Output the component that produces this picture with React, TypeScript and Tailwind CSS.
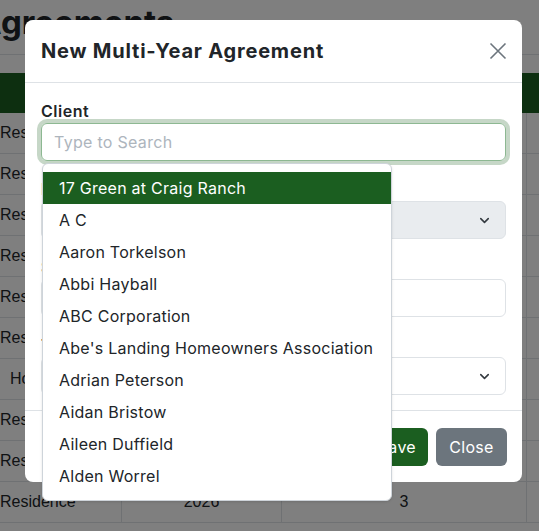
import { ChevronDown } from "lucide-react";

const clients = [
  "17 Green at Craig Ranch",
  "A C",
  "Aaron Torkelson",
  "Abbi Hayball",
  "ABC Corporation",
  "Abe's Landing Homeowners Association",
  "Adrian Peterson",
  "Aidan Bristow",
  "Aileen Duffield",
  "Alden Worrel",
];

const rows = [
  "Residence",
  "Residence",
  "Residence",
  "Residence",
  "Residence",
  "Residence",
  "Home",
  "Residence",
  "Residence",
  "Residence",
];

function Background() {
  return (
    <div className="font-['Liberation_Sans',sans-serif] text-[#212529]">
      <div className="h-[55px] border-b border-[#dee2e6] overflow-hidden">
        <h1 className="ml-[-23px] mt-[2px] font-['Inter',sans-serif] text-[33px] font-bold leading-[40px]">
          Agreements
        </h1>
      </div>
      <div className="mt-[18px]">
        <div className="h-[40px] bg-[#1b5e20]" />
        {rows.map((r, i) => (
          <div
            key={i}
            className="grid h-[41px] grid-cols-[122px_160px_245px_1fr] border-b border-[#dee2e6] text-[16px]"
          >
            <div className={`flex items-center border-r border-[#dee2e6] ${r === "Home" ? "pl-[10px]" : ""}`}>
              {r}
            </div>
            <div className="flex items-center justify-center border-r border-[#dee2e6]">2026</div>
            <div className="flex items-center justify-center border-r border-[#dee2e6]">3</div>
            <div />
          </div>
        ))}
      </div>
    </div>
  );
}

function Field({ label, children }: { label: string; children: React.ReactNode }) {
  return (
    <div>
      <div className="h-[24px] text-[16px] font-semibold leading-[24px] tracking-[0.5px]">{label}</div>
      {children}
    </div>
  );
}

export default function App() {
  return (
    <div className="relative h-[531px] w-[539px] overflow-hidden bg-white">
      <Background />
      <div className="absolute inset-0 bg-black/50" />

      <div className="absolute left-[25px] top-[20px] w-[497px] rounded-lg bg-white font-['Inter',sans-serif] text-[#212529]">
        <div className="flex h-[63px] items-center justify-between border-b border-[#dee2e6] pl-[16px] pr-[15px]">
          <h2 className="text-[20px] font-bold tracking-[0.8px]">New Multi-Year Agreement</h2>
          <svg width="18" height="18" viewBox="0 0 18 18" className="text-[#6c757d]">
            <path d="M1.5 1.5 16.5 16.5M16.5 1.5 1.5 16.5" stroke="currentColor" strokeWidth="1.6" fill="none" />
          </svg>
        </div>

        <div className="flex flex-col gap-4 px-[16px] pb-[15px] pt-[16px] tracking-[0.3px]">
          <Field label="Client">
            <div className="relative">
              <div className="flex h-[38px] items-center rounded-md border border-[#8db892] px-3 shadow-[0_0_0_4px_rgba(27,94,32,0.25)]">
                <span className="text-[16px] text-[#adb5bd]">Type to Search</span>
              </div>
              <div className="absolute left-[1px] top-[40px] z-10 w-[350px] rounded-md border border-[#ced4da] bg-white py-2 shadow-sm">
                {clients.map((c, i) => (
                  <div
                    key={c}
                    className={`flex h-[32px] items-center whitespace-nowrap px-4 text-[16px] tracking-[0.25px] ${i === 0 ? "bg-[#1b5e20] text-white" : ""}`}
                  >
                    {c}
                  </div>
                ))}
              </div>
            </div>
          </Field>
          <Field label="Property">
            <div className="flex h-[38px] items-center justify-end rounded-md border border-[#dee2e6] bg-[#e9ecef] pr-[13px]">
              <ChevronDown size={15} strokeWidth={2.5} className="text-[#343a40]" />
            </div>
          </Field>
          <Field label="Start Year">
            <div className="h-[38px] rounded-md border border-[#dee2e6]" />
          </Field>
          <Field label="Term">
            <div className="flex h-[38px] items-center justify-end rounded-md border border-[#dee2e6] pr-[13px]">
              <ChevronDown size={15} strokeWidth={2.5} className="text-[#343a40]" />
            </div>
          </Field>
        </div>

        <div className="flex justify-end gap-2 border-t border-[#dee2e6] px-[15px] pb-[16px] pt-[17px] tracking-[0.3px]">
          <button className="h-[38px] rounded-md bg-[#1b5e20] px-3 text-[16px] text-white">Save</button>
          <button className="h-[38px] w-[71px] rounded-md bg-[#6c757d] text-[16px] text-white">Close</button>
        </div>
      </div>
    </div>
  );
}
